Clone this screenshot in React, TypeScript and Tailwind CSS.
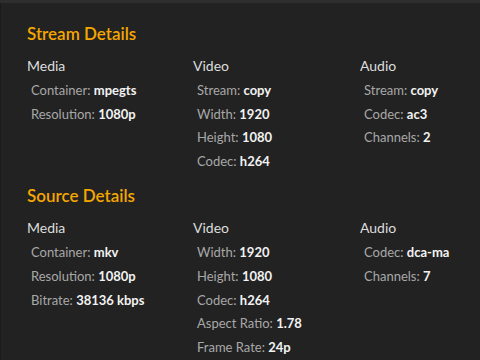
import React from "react";

type Item = { label: string; value: string };
type Column = { title: string; items: Item[] };
type Section = { title: string; columns: Column[] };

const sections: Section[] = [
  {
    title: "Stream Details",
    columns: [
      {
        title: "Media",
        items: [
          { label: "Container", value: "mpegts" },
          { label: "Resolution", value: "1080p" },
        ],
      },
      {
        title: "Video",
        items: [
          { label: "Stream", value: "copy" },
          { label: "Width", value: "1920" },
          { label: "Height", value: "1080" },
          { label: "Codec", value: "h264" },
        ],
      },
      {
        title: "Audio",
        items: [
          { label: "Stream", value: "copy" },
          { label: "Codec", value: "ac3" },
          { label: "Channels", value: "2" },
        ],
      },
    ],
  },
  {
    title: "Source Details",
    columns: [
      {
        title: "Media",
        items: [
          { label: "Container", value: "mkv" },
          { label: "Resolution", value: "1080p" },
          { label: "Bitrate", value: "38136 kbps" },
        ],
      },
      {
        title: "Video",
        items: [
          { label: "Width", value: "1920" },
          { label: "Height", value: "1080" },
          { label: "Codec", value: "h264" },
          { label: "Aspect Ratio", value: "1.78" },
          { label: "Frame Rate", value: "24p" },
        ],
      },
      {
        title: "Audio",
        items: [
          { label: "Codec", value: "dca-ma" },
          { label: "Channels", value: "7" },
        ],
      },
    ],
  },
];

export default function App() {
  return (
    <div className="w-[480px] h-[360px] overflow-hidden bg-[#222222] font-['Lato','Open_Sans',sans-serif]">
      <div className="h-[3px] bg-[#2e2e2e]" />
      <div className="h-[357px] border-l border-[#1b1b1b] pl-[26px] pt-[19px]">
        {sections.map((section) => (
          <div key={section.title} className="mb-[11px]">
            <h2 className="text-[17px] leading-[24px] font-semibold text-[#f5a700]">
              {section.title}
            </h2>
            <div className="grid grid-cols-[166px_167px_1fr] mt-[10px]">
              {section.columns.map((col) => (
                <div key={col.title}>
                  <div className="text-[14px] leading-[20px] text-[#dddddd]">
                    {col.title}
                  </div>
                  <div className="pl-[4px] mt-[3px]">
                    {col.items.map((item) => (
                      <div
                        key={item.label}
                        className="text-[13px] leading-[23.6px] text-[#a8a8a8]"
                      >
                        {item.label}:{" "}
                        <span className="font-bold text-[#f2f2f2]">
                          {item.value}
                        </span>
                      </div>
                    ))}
                  </div>
                </div>
              ))}
            </div>
          </div>
        ))}
      </div>
    </div>
  );
}
